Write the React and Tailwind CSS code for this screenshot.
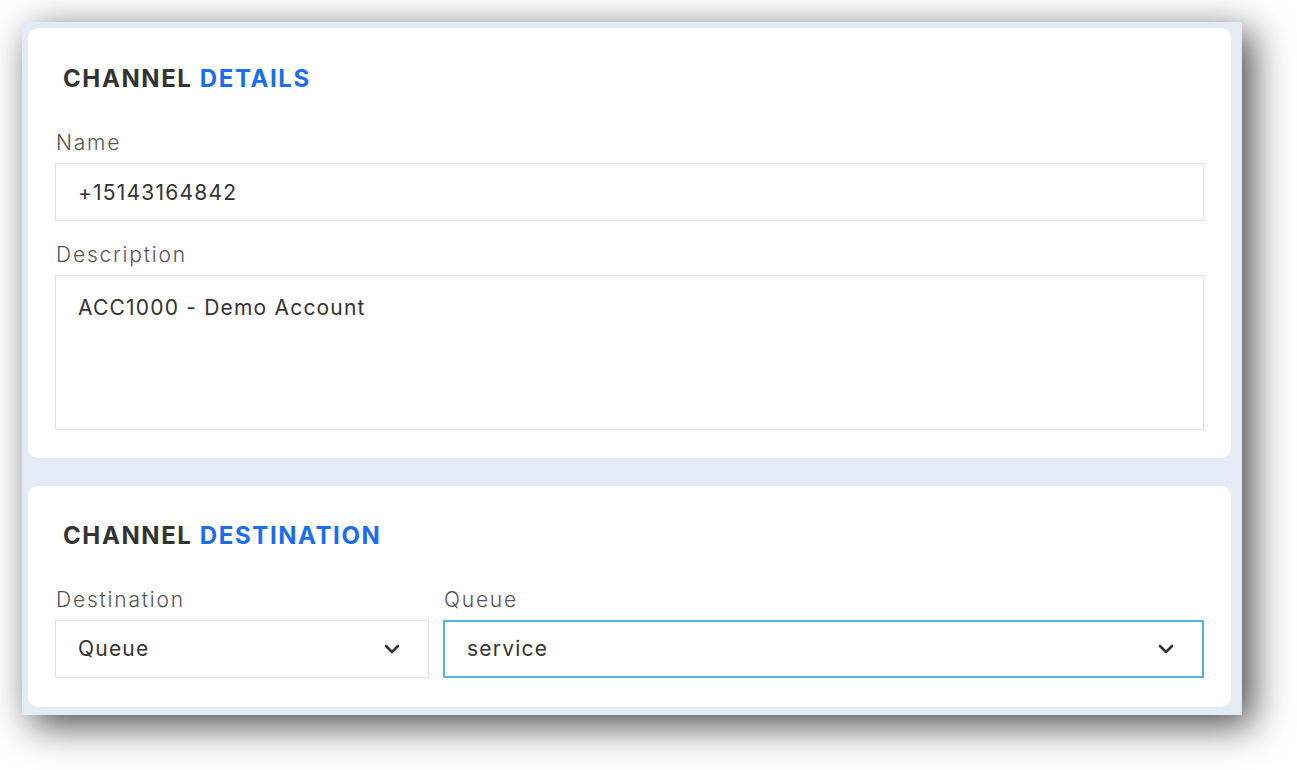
import React from 'react';
import { ChevronDown } from 'lucide-react';

const font = { fontFamily: '"Inter", "Noto Sans", sans-serif' };

const SectionTitle = ({ first, second }) => (
  <h2 className="ml-[8px] h-[34px] text-[24px] leading-[34px] font-bold tracking-[1.6px] text-[#333333]">
    {first} <span className="text-[#1a6cf0]">{second}</span>
  </h2>
);

const Label = ({ children }) => (
  <div className="ml-[1px] h-[28px] text-[21px] leading-[29px] font-light tracking-[1.8px] text-[#555555]">{children}</div>
);

const SelectBox = ({ value, active, className }) => (
  <div
    className={`flex h-[58px] items-center justify-between bg-white pl-[22px] pr-[24px] text-[21px] tracking-[1.2px] text-[#333333] ${
      active ? 'border-2 border-[#4cb8dc]' : 'border border-[#e0e0e0]'
    } ${className}`}
  >
    <span>{value}</span>
    <ChevronDown size={24} strokeWidth={2.6} className="text-[#333333]" />
  </div>
);

const App = () => {
  return (
    <div className="min-h-screen w-full bg-white pl-[22px] pt-[22px]" style={font}>
      <div className="flex h-[693px] w-[1220px] flex-col gap-[28px] bg-[#e4ebf6] pl-[6px] pr-[11px] pt-[6px] shadow-[10px_10px_36px_rgba(0,0,0,0.72)]">
        {/* Channel details */}
        <div className="flex h-[430px] flex-col rounded-[10px] bg-white px-[27px] pt-[34px]">
          <SectionTitle first="CHANNEL" second="DETAILS" />
          <div className="mt-[32px]">
            <Label>Name</Label>
            <div className="mt-[7px] flex h-[58px] items-center border border-[#e0e0e0] pl-[22px] pt-[1px] text-[21px] tracking-[1.2px] text-[#333333]">
              +15143164842
            </div>
          </div>
          <div className="mt-[19px]">
            <Label>Description</Label>
            <div className="mt-[7px] h-[155px] border border-[#e0e0e0] pl-[22px] pt-[18px] text-[21px] leading-[28px] tracking-[1.2px] text-[#333333]">
              ACC1000 - Demo Account
            </div>
          </div>
        </div>

        {/* Channel destination */}
        <div className="flex h-[221px] flex-col rounded-[10px] bg-white px-[27px] pt-[33px]">
          <SectionTitle first="CHANNEL" second="DESTINATION" />
          <div className="mt-[32px] flex gap-[14px]">
            <div className="w-[374px]">
              <Label>Destination</Label>
              <SelectBox value="Queue" className="mt-[7px]" />
            </div>
            <div className="flex-1">
              <Label>Queue</Label>
              <SelectBox value="service" active className="mt-[7px]" />
            </div>
          </div>
        </div>
      </div>
    </div>
  );
};

export default App;
